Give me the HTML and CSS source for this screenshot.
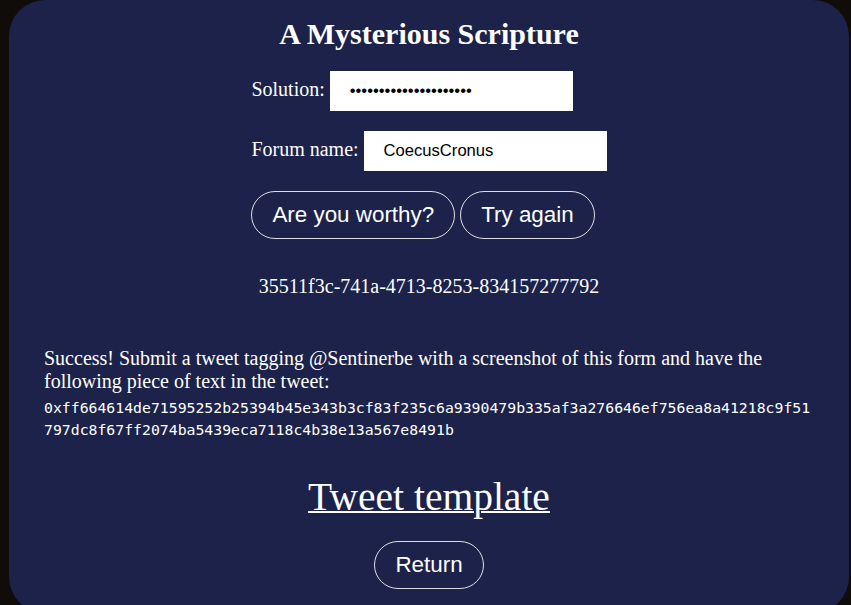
FILE: index.html
```html
<!DOCTYPE html>
<html>
<head>
<meta charset="utf-8">
<link rel="stylesheet" href="styles.css">
</head>
<body>
<div class="card">
  <h1 class="title">A Mysterious Scripture</h1>
  <div class="form">
    <div class="row row-first">
      <label class="label">Solution:</label>
      <input class="field" type="password" value="abcdefghijklmnopqrstu">
    </div>
    <div class="row">
      <label class="label">Forum name:</label>
      <input class="field" type="text" value="CoecusCronus">
    </div>
    <div class="row buttons">
      <button class="btn">Are you worthy?</button>
      <button class="btn">Try again</button>
    </div>
  </div>
  <p class="uuid">35511f3c-741a-4713-8253-834157277792</p>
  <div class="success">
    <p class="msg">Success! Submit a tweet tagging @Sentinerbe with a screenshot of this form and have the following piece of text in the tweet:</p>
    <code class="hash">0xff664614de71595252b25394b45e343b3cf83f235c6a9390479b335af3a276646ef756ea8a41218c9f51797dc8f67ff2074ba5439eca7118c4b38e13a567e8491b</code>
  </div>
  <div class="link-wrap"><a class="tweet" href="#">Tweet template</a></div>
  <div class="return-wrap"><button class="btn">Return</button></div>
</div>
</body>
</html>
```
FILE: styles.css
```css
html, body {
  margin: 0;
  padding: 0;
  background: #0f0c0a;
  height: 100%;
  overflow: hidden;
}
.card {
  margin-left: 9px;
  width: 840px;
  box-sizing: border-box;
  padding: 17px 35px 24px;
  background: #1c2249;
  border-radius: 36px;
  color: #ffffff;
  font-family: "Liberation Serif", "Times New Roman", serif;
  font-size: 20px;
}
.title {
  margin: 0;
  font-size: 30px;
  font-weight: bold;
  text-align: center;
  line-height: 34px;
}
.form {
  width: fit-content;
  margin: 0 auto;
}
.row {
  display: flex;
  align-items: center;
  gap: 5px;
  margin-top: 20px;
}
.row-first {
  margin-top: 20px;
}
.label {
  line-height: 23px;
  margin-bottom: 4px;
}
.field {
  width: 243px;
  height: 40px;
  box-sizing: border-box;
  border: none;
  outline: none;
  padding: 0 20px;
  font-family: "Liberation Sans", Arial, sans-serif;
  font-size: 16.6px;
  color: #000;
  background: #fff;
}
.buttons {
  gap: 5px;
}
.btn {
  font-family: "Liberation Sans", Arial, sans-serif;
  font-size: 22.4px;
  line-height: 26px;
  color: #fff;
  background: transparent;
  border: 1px solid rgba(255, 255, 255, 0.85);
  border-radius: 24px;
  padding: 10px 20px;
  cursor: pointer;
}
.uuid {
  margin: 36px 0 0;
  text-align: center;
  line-height: 23px;
}
.success {
  margin-top: 49px;
}
.msg {
  margin: 0;
  line-height: 23px;
}
.hash {
  display: block;
  margin-top: 4px;
  font-family: "DejaVu Sans Mono", "Liberation Mono", monospace;
  font-size: 14.8px;
  line-height: 22px;
  word-break: break-all;
}
.link-wrap {
  margin-top: 34px;
  text-align: center;
  line-height: 45px;
}
.tweet {
  color: #fff;
  font-size: 39.5px;
  text-decoration: underline;
  text-decoration-thickness: 2px;
}
.return-wrap {
  margin-top: 15px;
  text-align: center;
}
```
